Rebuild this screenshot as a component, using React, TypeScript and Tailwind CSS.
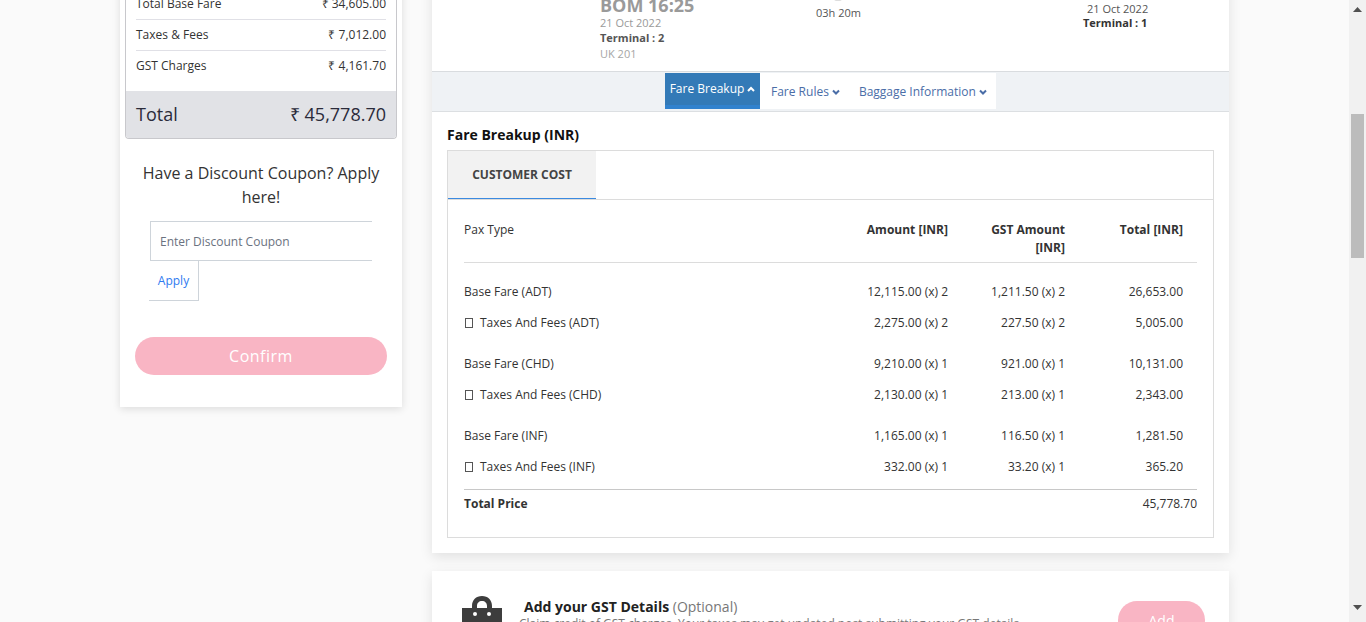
import React from "react";

const rows = [
  { a: "Base Fare (ADT)", b: "12,115.00 (x) 2", c: "1,211.50 (x) 2", d: "26,653.00", tax: false, gap: false },
  { a: "Taxes And Fees (ADT)", b: "2,275.00 (x) 2", c: "227.50 (x) 2", d: "5,005.00", tax: true, gap: false },
  { a: "Base Fare (CHD)", b: "9,210.00 (x) 1", c: "921.00 (x) 1", d: "10,131.00", tax: false, gap: true },
  { a: "Taxes And Fees (CHD)", b: "2,130.00 (x) 1", c: "213.00 (x) 1", d: "2,343.00", tax: true, gap: false },
  { a: "Base Fare (INF)", b: "1,165.00 (x) 1", c: "116.50 (x) 1", d: "1,281.50", tax: false, gap: true },
  { a: "Taxes And Fees (INF)", b: "332.00 (x) 1", c: "33.20 (x) 1", d: "365.20", tax: true, gap: false },
];

function PriceRow({ label, value, border, last }: { label: string; value: string; border?: boolean; last?: boolean }) {
  return (
    <div className={`mx-[10px] flex items-center justify-between text-[12px] text-[#333] ${last ? "h-[30px]" : "h-[31px]"} ${border ? "border-b border-[#e0e0e6]" : ""}`}>
      <span>{label}</span>
      <span>{value}</span>
    </div>
  );
}

function Chevron({ up, className }: { up?: boolean; className?: string }) {
  return (
    <svg width="8" height="6" viewBox="0 0 8 6" className={className}>
      <polyline points={up ? "1,5 4,2 7,5" : "1,1.5 4,4.5 7,1.5"} fill="none" stroke="currentColor" strokeWidth="2" />
    </svg>
  );
}

function Bag() {
  return (
    <svg width="40" height="40" viewBox="0 0 40 40" className="mt-[24px] shrink-0">
      <path d="M10 14V11C10 5 14 1 20 1s10 4 10 10v3h-5v-3c0-3-2-5-5-5s-5 2-5 5v3z" fill="#3d3d3d" />
      <rect x="0" y="13" width="40" height="27" fill="#3d3d3d" />
      <circle cx="13" cy="19" r="2" fill="#fff" />
      <circle cx="27" cy="19" r="2" fill="#fff" />
    </svg>
  );
}

export default function App() {
  return (
    <div className="flex h-[622px] w-[1366px] overflow-hidden bg-[#fafafa] font-['Open_Sans',sans-serif] text-[#333]">
      <div className="w-[1349px] shrink-0">
        <div className="-mt-[30px] flex items-start gap-[30px] pl-[120px]">
          {/* left column */}
          <aside className="h-[437px] w-[282px] shrink-0 bg-white px-[5px] shadow-[0_2px_8px_rgba(0,0,0,0.12)]">
            <div className="overflow-hidden rounded-b-[4px] border-x border-b border-[#c8c8cc]">
              <div className="flex flex-col pt-[19px]">
                <PriceRow label="Total Base Fare" value="₹ 34,605.00" border />
                <PriceRow label="Taxes & Fees" value="₹ 7,012.00" border />
                <PriceRow label="GST Charges" value="₹ 4,161.70" last />
              </div>
              <div className="mt-[10px] flex h-[47px] items-center justify-between bg-[#e1e2e6] px-[10px] pb-[1px] text-[#2b2b3a]">
                <span className="text-[18px]">Total</span>
                <span className="text-[18px]">₹ 45,778.70</span>
              </div>
            </div>
            <div className="mt-[22px] px-[10px] text-center text-[16px] leading-[24px] text-[#333]">
              Have a Discount Coupon? Apply here!
            </div>
            <div className="ml-[25px] mt-[12px] flex h-[40px] w-[222px] items-center border-y border-l border-[#ced4da] pl-[9px] pt-[1px] text-[12px] text-[#6b7280]">
              Enter Discount Coupon
            </div>
            <div className="ml-[24px] flex h-[40px] w-[50px] items-center justify-center border-r border-b border-[#ced4da] text-[12px] text-[#2f7bf0]">
              Apply
            </div>
            <div className="mx-[10px] mt-[36px] flex h-[38px] items-center justify-center rounded-full bg-[#f9b5c4] text-[16px] font-medium tracking-[0.5px] text-white">
              Confirm
            </div>
          </aside>

          {/* right column */}
          <main className="w-[797px] shrink-0">
            <section className="bg-white shadow-[0_4px_12px_rgba(0,0,0,0.1)]">
              <div className="relative h-[102px] border-b border-[#d9dcdf]">
                <div className="absolute left-[168px] top-[25px] text-[18px] font-bold leading-[20px] text-[#9a9a9a]">BOM 16:25</div>
                <div className="absolute left-[168px] top-[45px] text-[11px] leading-[15px] text-[#9a9a9a]">21 Oct 2022</div>
                <div className="absolute left-[168px] top-[60px] text-[11px] font-bold leading-[15px] text-[#555]">Terminal : 2</div>
                <div className="absolute left-[168px] top-[76px] text-[11px] leading-[15px] text-[#a5a5a5]">UK 201</div>
                <div className="absolute left-[402px] top-[26px] h-[5px] w-[8px] rounded-full bg-[#ddd]" />
                <div className="absolute left-[384px] top-[35px] text-[11px] leading-[15px] text-[#555]">03h 20m</div>
                <div className="absolute left-[655px] top-[31px] text-[11px] leading-[15px] text-[#555]">21 Oct 2022</div>
                <div className="absolute left-[651px] top-[45px] text-[11px] font-bold leading-[15px] text-[#333]">Terminal : 1</div>
              </div>
              <div className="flex h-[40px] justify-center border-b border-[#dcdfe2] bg-[#eff2f5] pt-[1px]">
                <div className="flex h-[36px] w-[95px] items-start justify-center gap-[3px] border-b-[4px] border-[#3182ce] bg-[#337ab7] pt-[8px] text-[12px] leading-[16px] text-white">
                  Fare Breakup <Chevron up className="mt-[5px]" />
                </div>
                <div className="flex h-[36px] w-[236px] items-center bg-white pl-[11px] pt-[1px] text-[12px] text-[#4a6da7]">
                  <span>Fare Rules</span>
                  <Chevron className="ml-[3px]" />
                  <span className="ml-[19px]">Baggage Information</span>
                  <Chevron className="ml-[3px]" />
                </div>
              </div>
              <div className="px-[15px] pb-[15px]">
                <h3 className="pt-[13px] text-[14px] font-bold leading-[20px] text-[#111]">Fare Breakup (INR)</h3>
                <div className="mt-[5px] border border-[#dcdcdc] px-0 pb-[20px]">
                  <div className="border-b border-[#dcdcdc]">
                    <div className="flex h-[48px] w-[148px] items-center justify-center border-b border-[#3b8ae0] bg-[#f2f2f2] text-[12px] font-bold text-[#444]">
                      CUSTOMER COST
                    </div>
                  </div>
                  <div className="mx-[16px] pt-[21px]">
                    <div className="grid grid-cols-[370px_114px_117px_118px_14px] border-b border-[#dcdcdc] pb-[5px] text-[12px] leading-[18px]">
                      <div>Pax Type</div>
                      <div className="text-right font-bold">Amount [INR]</div>
                      <div className="pl-[30px] text-right font-bold">GST Amount [INR]</div>
                      <div className="text-right font-bold">Total [INR]</div>
                      <div />
                    </div>
                    <div className="pt-[13px]">
                      {rows.map((r) => (
                        <div key={r.a} className={`grid h-[31px] grid-cols-[370px_114px_117px_118px_14px] items-center text-[12px] ${r.gap ? "mt-[10px]" : ""}`}>
                          <div className="flex items-center">
                            {r.tax && <span className="ml-[1px] mr-[7px] h-[10px] w-[8px] border border-[#555]" />}
                            {r.a}
                          </div>
                          <div className="text-right">{r.b}</div>
                          <div className="text-right">{r.c}</div>
                          <div className="text-right">{r.d}</div>
                        </div>
                      ))}
                    </div>
                    <div className="mt-[7px] flex h-[28px] items-center justify-between border-t border-[#c8c8c8] text-[12px]">
                      <span className="font-bold">Total Price</span>
                      <span>45,778.70</span>
                    </div>
                  </div>
                </div>
              </div>
            </section>
            <section className="mt-[18px] flex h-[100px] items-start bg-white pl-[30px] pr-[24px] shadow-[0_4px_12px_rgba(0,0,0,0.1)]">
              <Bag />
              <div className="ml-[17px] pt-[25px]">
                <div className="pl-[5px] text-[14px] leading-[22px]"><span className="font-bold text-[#222]">Add your GST Details</span> <span className="text-[#777]">(Optional)</span></div>
                <div className="-mt-[3px] text-[12px] text-[#777]">Claim credit of GST charges. Your taxes may get updated post submitting your GST details.</div>
              </div>
              <div className="ml-auto mt-[30px] flex h-[38px] w-[87px] items-center justify-center rounded-full bg-[#f9b5c4] text-[14px] text-white">Add</div>
            </section>
          </main>
        </div>
      </div>

      {/* browser scrollbar */}
      <div className="flex w-[17px] shrink-0 flex-col items-center bg-[#f1f1f1]">
        <svg width="9" height="5" viewBox="0 0 9 5" className="mt-[7px]"><path d="M4.5 0L9 5H0z" fill="#505050" /></svg>
        <div className="mt-[102px] h-[144px] w-[13px] bg-[#bcbcbc]" />
        <svg width="9" height="5" viewBox="0 0 9 5" className="mt-[347px]"><path d="M0 0H9L4.5 5z" fill="#505050" /></svg>
      </div>
    </div>
  );
}
